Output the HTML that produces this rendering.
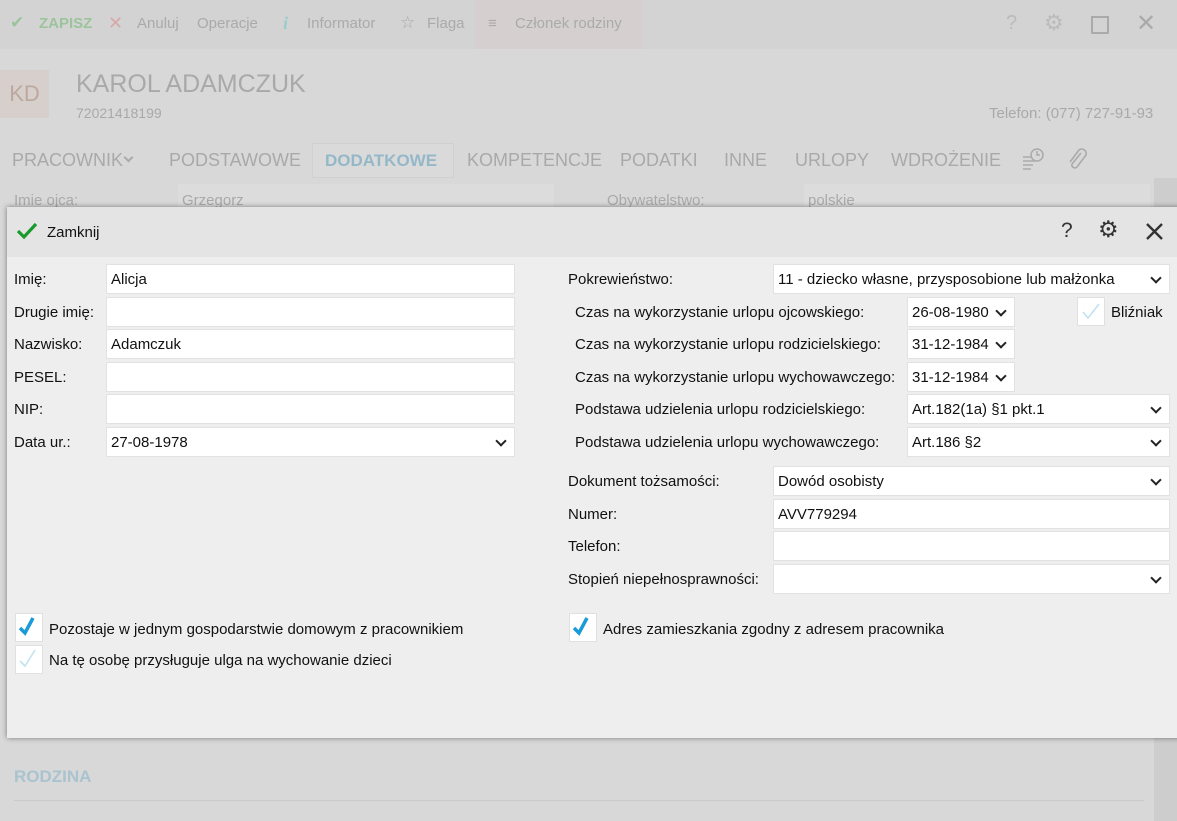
<!DOCTYPE html>
<html><head><meta charset="utf-8"><style>
*{box-sizing:border-box;margin:0;padding:0}
body{width:1177px;height:821px;overflow:hidden;background:#d8d8d8;font-family:"Liberation Sans",sans-serif;position:relative;color:#111}
.a{position:absolute;white-space:nowrap}
.g{color:#a9a9a9}
.t{position:absolute;top:150px;font-size:18px;color:#a9a9a9;white-space:nowrap}
.tb{position:absolute;top:15px;font-size:15px;color:#aaa;white-space:nowrap}
.inp{position:absolute;background:#fff;border:1px solid #e2e2e2;height:30px;font-size:15px;line-height:30px;padding-left:4px;color:#111}
.sel::after{content:"";position:absolute;right:9px;top:9px;width:6px;height:6px;border-right:2px solid #222;border-bottom:2px solid #222;transform:rotate(45deg)}
.lbl{position:absolute;font-size:15px;line-height:32px;color:#111;white-space:nowrap}
.cb{position:absolute;width:28px;height:29px;background:#fff;border:1px solid #e0e0e0}
</style></head><body>
<div class="a" style="left:0;top:0;width:1177px;height:49px;background:#d3d3d3"></div>
<div class="a" style="left:475px;top:0;width:168px;height:49px;background:#d6cfcf"></div>
<div class="tb" style="left:10px;color:#9cc49c;font-size:17px;top:13px">✔</div>
<div class="tb" style="left:39px;color:#9cc49c;font-weight:bold">ZAPISZ</div>
<div class="tb" style="left:108px;color:#d8a8a8;font-size:18px;top:13px">✕</div>
<div class="tb" style="left:137px">Anuluj</div>
<div class="tb" style="left:197px">Operacje</div>
<div class="tb" style="left:283px;color:#9cc;font-style:italic;font-weight:bold;font-family:'Liberation Serif',serif;font-size:18px;top:13px">i</div>
<div class="tb" style="left:307px">Informator</div>
<div class="tb" style="left:400px;font-size:17px;top:13px">☆</div>
<div class="tb" style="left:427px">Flaga</div>
<div class="tb" style="left:488px">≡</div>
<div class="tb" style="left:515px">Członek rodziny</div>
<div class="a" style="left:1006px;top:12px;font-size:20px;color:#bbb">?</div>
<div class="a" style="left:1044px;top:10px;font-size:22px;color:#bbb">⚙</div>
<div class="a" style="left:1091px;top:16px;width:18px;height:18px;border:2px solid #aaa"></div>
<div class="a" style="left:1136px;top:9px;font-size:24px;color:#aaa">✕</div>
<div class="a" style="left:0;top:70px;width:49px;height:48px;background:#d6cfcb;color:#bca89e;font-size:22px;line-height:48px;text-align:center">KD</div>
<div class="a g" style="left:76px;top:70px;font-size:25px">KAROL ADAMCZUK</div>
<div class="a g" style="left:76px;top:105px;font-size:14px">72021418199</div>
<div class="a g" style="left:989px;top:105px;font-size:15px">Telefon: (077) 727-91-93</div>
<div class="a" style="left:312px;top:143px;width:142px;height:35px;background:#dadada;border:1px solid #d0d0d0"></div>
<div class="t" style="left:12px">PRACOWNIK</div>
<div class="a" style="left:125px;top:154px;width:7px;height:7px;border-right:2px solid #aaa;border-bottom:2px solid #aaa;transform:rotate(45deg)"></div>
<div class="t" style="left:169px">PODSTAWOWE</div>
<div class="t" style="left:325px;font-weight:bold;color:#94b8c8;font-size:17px;top:151px">DODATKOWE</div>
<div class="t" style="left:467px">KOMPETENCJE</div>
<div class="t" style="left:620px">PODATKI</div>
<div class="t" style="left:724px">INNE</div>
<div class="t" style="left:795px">URLOPY</div>
<div class="t" style="left:891px">WDROŻENIE</div>
<svg class="a" style="left:1020px;top:146px" width="28" height="26" viewBox="0 0 28 26" fill="none" stroke="#aaa" stroke-width="1.5"><circle cx="17" cy="9" r="6"/><path d="M17 5v4h3M3 11h8M3 15h12M3 19h10M3 23h8"/></svg>
<svg class="a" style="left:1066px;top:146px" width="22" height="26" viewBox="0 0 22 26" fill="none" stroke="#aaa" stroke-width="1.6"><path d="M15 7L6 18a3 3 0 0 0 5 3l9-12a4.5 4.5 0 0 0-7-5L4 16"/></svg>
<div class="a g" style="left:14px;top:192px;font-size:15px">Imie ojca:</div>
<div class="a" style="left:178px;top:184px;width:376px;height:24px;background:#dcdcdc"></div>
<div class="a g" style="left:182px;top:192px;font-size:15px">Grzegorz</div>
<div class="a g" style="left:607px;top:192px;font-size:15px">Obywatelstwo:</div>
<div class="a" style="left:804px;top:184px;width:346px;height:24px;background:#dcdcdc"></div>
<div class="a g" style="left:808px;top:192px;font-size:15px">polskie</div>
<div class="a" style="left:1154px;top:178px;width:23px;height:643px;background:#cdcdcd"></div>
<div class="a" style="left:14px;top:767px;font-size:17px;font-weight:bold;color:#a9c3cf">RODZINA</div>
<div class="a" style="left:14px;top:800px;width:1130px;height:1px;background:#cacaca"></div>
<div class="a" style="left:7px;top:207px;width:1175px;height:531px;background:#eeeeee;box-shadow:0 0 5px rgba(0,0,0,.45)">
<div style="height:50px;background:#e4e4e4"></div>
</div>
<svg class="a" style="left:16px;top:222px" width="22" height="18" viewBox="0 0 22 18"><path d="M2 9l6 6L20 2" fill="none" stroke="#1a9a2a" stroke-width="3.2"/></svg>
<div class="a" style="left:47px;top:224px;font-size:15px">Zamknij</div>
<div class="a" style="left:1061px;top:219px;font-size:21px;color:#333">?</div>
<div class="a" style="left:1098px;top:216px;font-size:23px;color:#333">⚙</div>
<svg class="a" style="left:1145px;top:222px" width="19" height="19" viewBox="0 0 19 19"><path d="M2 2l15 15M17 2L2 17" stroke="#333" stroke-width="2.4"/></svg>

<div class="lbl" style="left:14px;top:264px">Imię:</div><div class="inp" style="left:106px;top:264px;width:409px">Alicja</div>
<div class="lbl" style="left:14px;top:297px">Drugie imię:</div><div class="inp" style="left:106px;top:297px;width:409px"></div>
<div class="lbl" style="left:14px;top:329px">Nazwisko:</div><div class="inp" style="left:106px;top:329px;width:409px">Adamczuk</div>
<div class="lbl" style="left:14px;top:362px">PESEL:</div><div class="inp" style="left:106px;top:362px;width:409px"></div>
<div class="lbl" style="left:14px;top:394px">NIP:</div><div class="inp" style="left:106px;top:394px;width:409px"></div>
<div class="lbl" style="left:14px;top:427px">Data ur.:</div><div class="inp sel" style="left:106px;top:427px;width:409px">27-08-1978</div>

<div class="lbl" style="left:568px;top:264px">Pokrewieństwo:</div><div class="inp sel" style="left:773px;top:264px;width:397px">11 - dziecko własne, przysposobione lub małżonka</div>
<div class="lbl" style="left:575px;top:297px">Czas na wykorzystanie urlopu ojcowskiego:</div><div class="inp sel" style="left:907px;top:297px;width:108px">26-08-1980</div>
<div class="lbl" style="left:575px;top:329px">Czas na wykorzystanie urlopu rodzicielskiego:</div><div class="inp sel" style="left:907px;top:329px;width:108px">31-12-1984</div>
<div class="lbl" style="left:575px;top:362px">Czas na wykorzystanie urlopu wychowawczego:</div><div class="inp sel" style="left:907px;top:362px;width:108px">31-12-1984</div>
<div class="cb" style="left:1077px;top:297px"><svg width="26" height="27" viewBox="0 0 26 27"><path d="M5 14l5 6L21 6" fill="none" stroke="#bfe3f0" stroke-width="1.6"/></svg></div>
<div class="lbl" style="left:1111px;top:297px">Bliźniak</div>
<div class="lbl" style="left:575px;top:394px">Podstawa udzielenia urlopu rodzicielskiego:</div><div class="inp sel" style="left:907px;top:394px;width:263px">Art.182(1a) §1 pkt.1</div>
<div class="lbl" style="left:575px;top:427px">Podstawa udzielenia urlopu wychowawczego:</div><div class="inp sel" style="left:907px;top:427px;width:263px">Art.186 §2</div>
<div class="lbl" style="left:568px;top:466px">Dokument tożsamości:</div><div class="inp sel" style="left:773px;top:466px;width:397px">Dowód osobisty</div>
<div class="lbl" style="left:568px;top:499px">Numer:</div><div class="inp" style="left:773px;top:499px;width:397px">AVV779294</div>
<div class="lbl" style="left:568px;top:531px">Telefon:</div><div class="inp" style="left:773px;top:531px;width:397px"></div>
<div class="lbl" style="left:568px;top:564px">Stopień niepełnosprawności:</div><div class="inp sel" style="left:773px;top:564px;width:397px"></div>

<div class="cb" style="left:15px;top:613px"><svg width="26" height="27" viewBox="0 0 26 27"><path d="M4 14l5 5L17 4" fill="none" stroke="#1a9ad6" stroke-width="3.5"/></svg></div>
<div class="lbl" style="left:49px;top:614px">Pozostaje w jednym gospodarstwie domowym z pracownikiem</div>
<div class="cb" style="left:15px;top:645px"><svg width="26" height="27" viewBox="0 0 26 27"><path d="M4 15l5 5L19 4" fill="none" stroke="#bfe3f0" stroke-width="1.6"/></svg></div>
<div class="lbl" style="left:49px;top:645px">Na tę osobę przysługuje ulga na wychowanie dzieci</div>
<div class="cb" style="left:569px;top:613px"><svg width="26" height="27" viewBox="0 0 26 27"><path d="M4 14l5 5L17 4" fill="none" stroke="#1a9ad6" stroke-width="3.5"/></svg></div>
<div class="lbl" style="left:603px;top:614px">Adres zamieszkania zgodny z adresem pracownika</div>
</body></html>
